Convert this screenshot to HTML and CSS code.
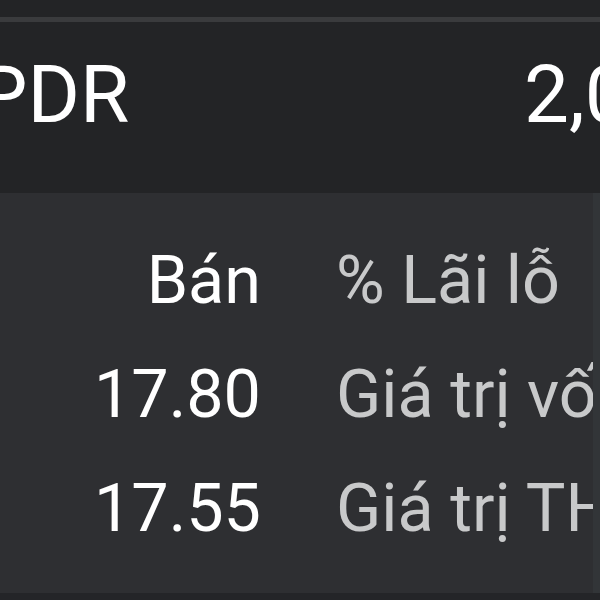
FILE: index.html
```html
<!DOCTYPE html>
<html lang="vi">
<head>
<meta charset="utf-8">
<link rel="stylesheet" href="styles.css">
</head>
<body>
<div class="screen">
  <div class="topbar"></div>
  <div class="divider"></div>
  <div class="hdr">
    <div class="sym">PDR</div>
    <div class="qty">2,000,000</div>
  </div>
  <div class="panel">
    <div class="grid">
      <div class="num">Bán</div><div class="lbl">% Lãi lỗ</div>
      <div class="num">17.80</div><div class="lbl">Giá trị vốn</div>
      <div class="num">17.55</div><div class="lbl">Giá trị THị trường</div>
    </div>
  </div>
  <div class="bottom"></div>
</div>
</body>
</html>
```
FILE: styles.css
```css
html, body {
  margin: 0;
  padding: 0;
  background: #232426;
}
.screen {
  width: 600px;
  height: 600px;
  overflow: hidden;
  font-family: Roboto, "Noto Sans", sans-serif;
  white-space: nowrap;
}
.topbar {
  height: 17px;
  background: #232426;
}
.divider {
  height: 5px;
  background: #3a3b3d;
}
.hdr {
  height: 171px;
  box-sizing: border-box;
  padding-top: 33px;
  background: #232426;
  display: flex;
  color: #ffffff;
  font-size: 80px;
  line-height: 80px;
}
.sym {
  flex: 0 0 547px;
  margin-left: -23px;
}
.qty {
  flex: 0 0 auto;
}
.panel {
  height: 400px;
  box-sizing: border-box;
  padding-top: 30px;
  background: #2e2f32;
  border-right: 7px solid #323538;
  overflow: hidden;
}
.grid {
  display: grid;
  grid-template-columns: 261px 1fr;
  column-gap: 75px;
  font-size: 66.5px;
  line-height: 114px;
}
.num {
  text-align: right;
  color: #ffffff;
}
.lbl {
  color: #c8c9ca;
  overflow: hidden;
}
.bottom {
  height: 7px;
  background: #242528;
}
```
